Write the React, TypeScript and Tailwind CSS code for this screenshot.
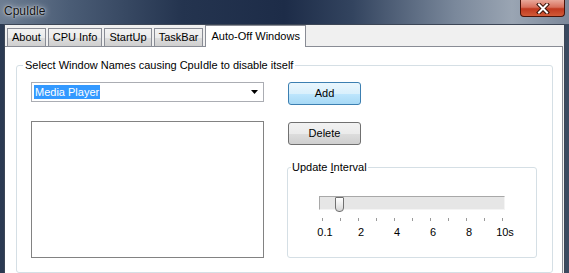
const tabs = ['About', 'CPU Info', 'StartUp', 'TaskBar'];

const scale = [
  { label: '0.1', tick: 0 },
  { label: '2', tick: 2 },
  { label: '4', tick: 4 },
  { label: '6', tick: 6 },
  { label: '8', tick: 8 },
  { label: '10s', tick: 10 },
];

function CloseButton() {
  return (
    <div className="w-[45px] h-[17px] mr-[4px] rounded-b-[4px] border border-t-0 border-[#4a1208] bg-[linear-gradient(180deg,#e9a89a_0%,#d8705c_45%,#c0391f_55%,#d25a38_100%)] flex items-center justify-center">
      <svg width="14" height="11" viewBox="0 0 14 11">
        <path d="M3 1.5 L11 9.5 M11 1.5 L3 9.5" stroke="#3a1208" strokeWidth="4" strokeLinecap="square" />
        <path d="M3 1.5 L11 9.5 M11 1.5 L3 9.5" stroke="#fff" strokeWidth="2" strokeLinecap="square" />
      </svg>
    </div>
  );
}

function Slider() {
  return (
    <div className="ml-[31px] mt-[22px] w-[186px]">
      <div className="relative h-[14px] bg-[#e6e6e6] border-t border-l border-[#a8a8a8] border-b border-r border-b-[#f4f4f4] border-r-[#f4f4f4]">
        <div className="absolute left-[15px] top-0 w-[9px] h-[15px] rounded-b-[4px] rounded-t-[1px] border border-[#707070] bg-[linear-gradient(180deg,#ffffff_0%,#ececec_50%,#d4d4d4_100%)]" />
      </div>
      <div className="ml-[3px] mt-[8px] w-[181px] h-[3px] flex justify-between">
        {Array.from({ length: 11 }).map((_, i) => (
          <div key={i} className="w-px h-[3px] bg-[#9a9a9a]" />
        ))}
      </div>
      <div className="relative h-[13px] mt-[5px] text-[11px] leading-[13px] text-black">
        {scale.map((s) => (
          <span
            key={s.label}
            className="absolute -translate-x-1/2"
            style={{ left: 6 + s.tick * 18 }}
          >
            {s.label}
          </span>
        ))}
      </div>
    </div>
  );
}

export default function App() {
  return (
    <div className="w-[569px] h-[273px] flex flex-col overflow-hidden bg-[linear-gradient(90deg,#2b3a52_0%,#1c2840_50%,#3a4a60_100%)] font-['Liberation_Sans',Arial,sans-serif] select-none">
      {/* title bar */}
      <div className="h-[24px] flex justify-between items-start bg-[linear-gradient(90deg,#6d7d92_0%,#4b5d76_12%,#24344f_32%,#1d2c48_50%,#33445f_62%,#7a889b_80%,#9aa5b3_90%,#7c889a_100%)]">
        <span className="pl-[4px] pt-[4px] text-[12px] leading-[14px] text-[#111] [text-shadow:0_0_6px_rgba(255,255,255,0.95),0_0_2px_rgba(255,255,255,0.8)]">
          CpuIdle
        </span>
        <CloseButton />
      </div>

      {/* client area */}
      <div className="flex-1 flex px-[4px]">
        <div className="flex-1 flex flex-col bg-[#f0f0f0] border-l border-t border-r border-[#3c4656]">
          {/* tabs */}
          <div className="h-[21px] flex items-end pl-[2px] gap-[2px] text-[11px] text-black">
            {tabs.map((t) => (
              <div
                key={t}
                className="h-[18px] px-[4px] flex items-center border border-b-0 border-[#898c95] bg-[linear-gradient(180deg,#f2f2f2_0%,#ebebeb_50%,#dddddd_51%,#cfcfcf_100%)]"
              >
                {t}
              </div>
            ))}
            <div className="h-[22px] -mb-px relative z-10 px-[5px] flex items-center border border-b-0 border-[#898c95] bg-white">
              Auto-Off Windows
            </div>
          </div>

          {/* tab panel */}
          <div className="flex-1 mr-[1px] bg-white border-t border-r border-[#898c95] pl-[11px] pt-[12px] text-[11px] text-black">
            <fieldset className="w-[537px] h-[214px] border border-[#d5dfe5] rounded-[3px] pl-[14px] pt-[10px] flex">
              <legend className="-ml-[8px] px-[2px] leading-[13px]">
                Select Window Names causing CpuIdle to disable itself
              </legend>

              <div className="w-[233px] flex flex-col">
                <div className="h-[20px] flex items-center justify-between border border-[#abadb3] bg-white pl-[2px] pr-[5px]">
                  <span className="bg-[#3399ff] text-white leading-[14px] px-[1px]">Media Player</span>
                  <svg width="7" height="4" viewBox="0 0 7 4">
                    <path d="M0 0 H7 L3.5 4 Z" fill="#000" />
                  </svg>
                </div>
                <div className="mt-[19px] h-[137px] border border-[#828282] bg-white" />
              </div>

              <div className="ml-[24px] flex flex-col">
                <button className="w-[73px] h-[23px] rounded-[3px] border border-[#3c7fb1] bg-[linear-gradient(180deg,#eaf6fd_0%,#d9f0fc_50%,#bee6fd_51%,#a7d9f5_100%)] text-[11px]">
                  Add
                </button>
                <button className="mt-[17px] w-[73px] h-[23px] rounded-[3px] border border-[#707070] bg-[linear-gradient(180deg,#f2f2f2_0%,#ebebeb_50%,#dddddd_51%,#cfcfcf_100%)] text-[11px]">
                  Delete
                </button>
                <fieldset className="-ml-[1px] mt-[16px] w-[250px] h-[97px] border border-[#d5dfe5] rounded-[3px]">
                  <legend className="ml-[3px] px-[1px] leading-[13px]">
                    Update <span className="underline">I</span>nterval
                  </legend>
                  <Slider />
                </fieldset>
              </div>
            </fieldset>
          </div>
        </div>
      </div>
    </div>
  );
}
